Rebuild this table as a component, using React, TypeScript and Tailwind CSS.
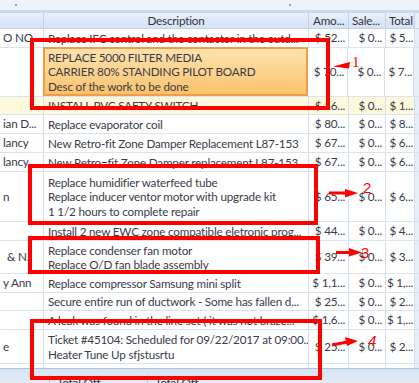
import React from "react";

type Row = {
  h: number;
  left?: string;
  leftPl?: number;
  desc: string[];
  amt: string;
  total: string;
  selected?: boolean;
  hover?: boolean;
};

const rows: Row[] = [
  { h: 19, left: "O NO...", desc: ["Replace IFC control and the contactor in the outd..."], amt: "$ 52...", total: "$ 5..." },
  {
    h: 49,
    desc: ["REPLACE 5000 FILTER MEDIA", "CARRIER 80% STANDING PILOT BOARD", "Desc of the work to be done"],
    amt: "$ 70...",
    total: "$ 7...",
    selected: true,
  },
  { h: 18, desc: ["INSTALL PVC SAFTY SWITCH"], amt: "$ 16...", total: "$ 1...", hover: true },
  { h: 19, left: "ian D...", desc: ["Replace evaporator coil"], amt: "$ 80...", total: "$ 8..." },
  { h: 19, left: "lancy", desc: ["New Retro-fit Zone Damper Replacement L87-153"], amt: "$ 67...", total: "$ 6..." },
  { h: 19, left: "lancy", desc: ["New Retro=fit Zone Damper replacement L87-153"], amt: "$ 67...", total: "$ 6..." },
  {
    h: 50,
    left: "n",
    desc: ["Replace humidifier waterfeed tube", "Replace inducer ventor motor with upgrade kit", "1 1/2 hours to complete repair"],
    amt: "$ 65...",
    total: "$ 6...",
  },
  { h: 19, desc: ["Install 2 new EWC zone compatible eletronic prog..."], amt: "$ 44...", total: "$ 4..." },
  {
    h: 33,
    left: "& N..",
    leftPl: 7,
    desc: ["Replace condenser fan motor", "Replace O/D fan blade assembly"],
    amt: "$ 39...",
    total: "$ 3...",
  },
  { h: 19, left: "y Ann", desc: ["Replace compressor Samsung mini split"], amt: "$ 1,1...", total: "$ 1,..." },
  { h: 18, desc: ["Secure entire run of ductwork - Some has fallen d..."], amt: "$ 25...", total: "$ 2..." },
  { h: 19, desc: ["A leak was found in the line set ( it was not braze..."], amt: "$ 1,6...", total: "$ 1,..." },
  {
    h: 34,
    left: "e",
    desc: ["Ticket #45104: Scheduled for 09/22/2017 at 09:00...", "Heater Tune Up sfjstusrtu"],
    amt: "$ 25...",
    total: "$ 2...",
  },
];

function GridRow({ r }: { r: Row }) {
  const bg = r.hover ? "bg-[#fef8dc]" : "bg-white";
  return (
    <div className="flex border-b border-[#d9e4f3]" style={{ height: r.h }}>
      <div className={`w-[44px] shrink-0 flex items-center overflow-hidden whitespace-nowrap border-r border-[#d3dff0] ${bg}`}>
        <span style={{ paddingLeft: r.leftPl ?? 3 }}>{r.left}</span>
      </div>
      {r.selected ? (
        <div className="w-[265px] shrink-0 -ml-[1px] -mt-[1px] h-[calc(100%+1px)] flex flex-col justify-center overflow-hidden whitespace-nowrap border-2 border-[#f49b45] bg-gradient-to-b from-[#fee3ad] to-[#fbc36c] pl-[3px] leading-[14.5px]">
          {r.desc.map((d, i) => (
            <div key={i}>{d}</div>
          ))}
        </div>
      ) : (
        <div className={`w-[265px] shrink-0 flex flex-col justify-center overflow-hidden whitespace-nowrap border-r border-[#d3dff0] pl-[4px] leading-[14.5px] ${bg}`}>
          {r.desc.map((d, i) => (
            <div key={i}>{d}</div>
          ))}
        </div>
      )}
      <div className={`w-[40px] shrink-0 flex items-center justify-end overflow-hidden whitespace-nowrap border-r border-[#d3dff0] pr-[3px] ${bg}`}>
        {r.amt}
      </div>
      <div className={`w-[37px] shrink-0 flex items-center justify-end overflow-hidden whitespace-nowrap border-r border-[#d3dff0] pr-[3px] ${bg}`}>
        $ 0...
      </div>
      <div className={`w-[29px] shrink-0 flex items-center justify-end overflow-hidden whitespace-nowrap border-r border-[#d3dff0] pr-[1px] ${bg}`}>
        {r.total}
      </div>
      <div className="flex-1 bg-[#e6eef8]" />
    </div>
  );
}

export default function App() {
  return (
    <div className="relative w-[419px] h-[383px] overflow-hidden bg-white font-[Lato,sans-serif] text-[11.7px] tracking-[-0.2px] text-[#3b3b4a]">
      {/* top strip */}
      <div className="relative h-[10px] bg-[#eef2f9]">
        <span className="absolute left-[15px] top-[4px] w-[2px] h-[2px] bg-[#9aa3b3]" />
        <span className="absolute left-[289px] top-[4px] w-[2px] h-[2px] bg-[#9aa3b3]" />
      </div>
      <div className="h-[3px] bg-[#c8d9ef]" />
      {/* header */}
      <div className="flex h-[16px] border-b border-[#c3d3e9] bg-gradient-to-b from-[#e8f0fa] to-[#d4e2f4] leading-[15px] text-[#333340]">
        <div className="w-[44px] shrink-0 border-r border-[#c3d3e9]" />
        <div className="w-[265px] shrink-0 border-r border-[#c3d3e9] text-center">Description</div>
        <div className="w-[40px] shrink-0 border-r border-[#c3d3e9] pl-[4px] overflow-hidden whitespace-nowrap">Amo...</div>
        <div className="w-[37px] shrink-0 border-r border-[#c3d3e9] pl-[3px] overflow-hidden whitespace-nowrap">Sale...</div>
        <div className="w-[29px] shrink-0 border-r border-[#c3d3e9] pl-[3px] overflow-hidden whitespace-nowrap">Total</div>
        <div className="flex-1 bg-[#e6eef8]" />
      </div>
      {rows.map((r, i) => (
        <GridRow key={i} r={r} />
      ))}
      {/* blank area */}
      <div className="flex h-[4px]">
        <div className="w-[44px] border-r border-[#d3dff0]" />
        <div className="w-[265px] border-r border-[#d3dff0]" />
        <div className="w-[40px] border-r border-[#d3dff0]" />
        <div className="w-[37px] border-r border-[#d3dff0]" />
        <div className="w-[29px] border-r border-[#d3dff0]" />
        <div className="flex-1 bg-[#e6eef8]" />
      </div>
      {/* footer */}
      <div className="flex h-[20px] border-t border-[#aec4e2] bg-gradient-to-b from-[#d9e5f4] to-[#e6eef8] pt-[6px] leading-[15px] text-[#333340]">
        <div className="w-[50px] shrink-0 border-r border-[#b9cbe4]" />
        <div className="w-[98px] shrink-0 border-r border-[#b9cbe4] pl-[7px] whitespace-nowrap overflow-hidden">Total Off...</div>
        <div className="w-[120px] shrink-0 pl-[7px] whitespace-nowrap overflow-hidden">Total Off...</div>
      </div>

      {/* annotations */}
      <svg className="absolute left-0 top-0 pointer-events-none" width="419" height="383" viewBox="0 0 419 383">
        <g fill="none" stroke="#ff0000" strokeWidth="4">
          <rect x="32" y="40" width="296" height="68" />
          <rect x="30" y="166" width="286" height="57" />
          <rect x="30" y="238" width="288" height="34" />
          <rect x="32" y="321" width="288" height="57" />
        </g>
        <g fill="#ff0000">
          <polygon points="333,66.5 350,62 349,68.5" />
          <rect x="329" y="191.5" width="18" height="3" />
          <polygon points="345,189 358,193 345,197.5" />
          <rect x="336" y="251" width="14" height="3" />
          <polygon points="349,248 362,252.5 349,256.5" />
          <polygon points="332,343.5 347,340.5 347.5,343.5 332.5,346.5" />
          <polygon points="345,337 358,341 347,346" />
        </g>
        <g fill="#ff0000" fontSize="15">
          <text x="352" y="67" fontFamily="Liberation Serif, serif">1</text>
          <text x="363" y="193" fontFamily="Liberation Sans, sans-serif">2</text>
          <text x="361" y="258" fontFamily="Liberation Sans, sans-serif">3</text>
          <text x="368" y="346" fontFamily="Liberation Sans, sans-serif" fontStyle="italic">4</text>
        </g>
      </svg>
    </div>
  );
}
